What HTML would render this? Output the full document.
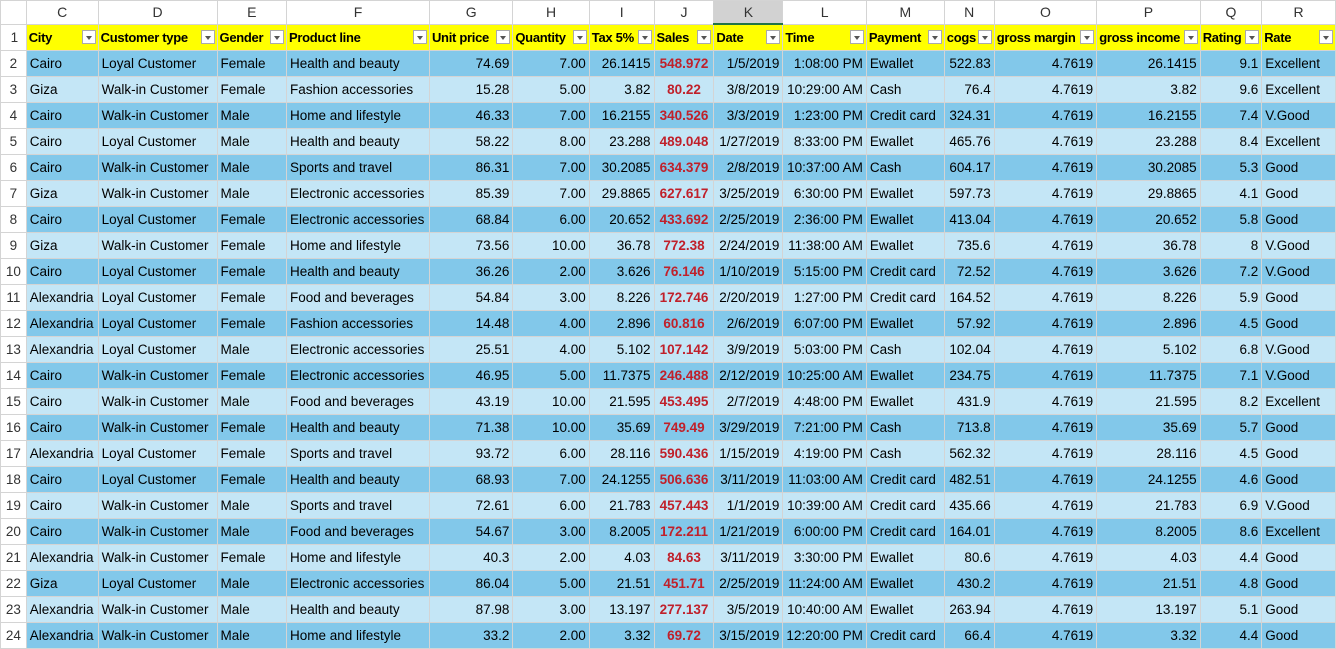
<!DOCTYPE html>
<html><head><meta charset="utf-8"><style>
body{margin:0;width:1336px;height:636px;overflow:hidden;background:#fff;font-family:"Liberation Sans",Arial,sans-serif;font-size:13.5px;color:#000}
table{border-collapse:collapse;table-layout:fixed;position:absolute;left:0;top:0}
td{height:25px;padding:0 3px;border:1px solid #d4d4d4;white-space:nowrap;overflow:hidden;line-height:25px}
tr.h td{height:22px;line-height:22px;background:#fff;text-align:center;color:#333;border-color:#d4d4d4;font-size:14px}
tr.h td.sel{background:#d2d2d2;border-bottom:2px solid #217346}
td.rn{background:#fff;text-align:center;color:#333;padding:0}
tr.y td{background:#ffff00;font-weight:bold;position:relative;font-size:13px;letter-spacing:-0.3px;padding-left:2px}
tr.y td.rn{background:#fff;font-weight:normal;font-size:13.5px;letter-spacing:0}
tr.d td{background:#82c8ea}
tr.l td{background:#c4e6f6}
tr.d td.rn,tr.l td.rn{background:#fff}
.r{text-align:right}.c{text-align:center}
.s{text-align:center;color:#c0202a;font-weight:bold}
.f{position:absolute;right:2px;top:5px;width:14px;height:14px;border:1px solid #aaa;background:#fff;box-sizing:border-box}
.f:after{content:"";position:absolute;left:3px;top:5px;border-left:3px solid transparent;border-right:3px solid transparent;border-top:4px solid #555}
</style></head><body>
<table>
<colgroup><col style="width:26px"><col style="width:72px"><col style="width:119px"><col style="width:70px"><col style="width:143px"><col style="width:84px"><col style="width:77px"><col style="width:65px"><col style="width:60px"><col style="width:69px"><col style="width:81px"><col style="width:78px"><col style="width:50px"><col style="width:103px"><col style="width:104px"><col style="width:62px"><col style="width:74px"></colgroup>
<tr class="h"><td></td><td>C</td><td>D</td><td>E</td><td>F</td><td>G</td><td>H</td><td>I</td><td>J</td><td class="sel">K</td><td>L</td><td>M</td><td>N</td><td>O</td><td>P</td><td>Q</td><td>R</td></tr>
<tr class="y"><td class="rn">1</td><td>City<span class="f"></span></td><td>Customer type<span class="f"></span></td><td>Gender<span class="f"></span></td><td>Product line<span class="f"></span></td><td>Unit price<span class="f"></span></td><td>Quantity<span class="f"></span></td><td>Tax 5%<span class="f"></span></td><td>Sales<span class="f"></span></td><td>Date<span class="f"></span></td><td>Time<span class="f"></span></td><td>Payment<span class="f"></span></td><td>cogs<span class="f"></span></td><td>gross margin<span class="f"></span></td><td>gross income<span class="f"></span></td><td>Rating<span class="f"></span></td><td>Rate<span class="f"></span></td></tr>
<tr class="d"><td class="rn">2</td><td>Cairo</td><td>Loyal Customer</td><td>Female</td><td>Health and beauty</td><td class="r">74.69</td><td class="r">7.00</td><td class="r">26.1415</td><td class="s">548.972</td><td class="r">1/5/2019</td><td class="r">1:08:00 PM</td><td>Ewallet</td><td class="r">522.83</td><td class="r">4.7619</td><td class="r">26.1415</td><td class="r">9.1</td><td>Excellent</td></tr>
<tr class="l"><td class="rn">3</td><td>Giza</td><td>Walk-in Customer</td><td>Female</td><td>Fashion accessories</td><td class="r">15.28</td><td class="r">5.00</td><td class="r">3.82</td><td class="s">80.22</td><td class="r">3/8/2019</td><td class="r">10:29:00 AM</td><td>Cash</td><td class="r">76.4</td><td class="r">4.7619</td><td class="r">3.82</td><td class="r">9.6</td><td>Excellent</td></tr>
<tr class="d"><td class="rn">4</td><td>Cairo</td><td>Walk-in Customer</td><td>Male</td><td>Home and lifestyle</td><td class="r">46.33</td><td class="r">7.00</td><td class="r">16.2155</td><td class="s">340.526</td><td class="r">3/3/2019</td><td class="r">1:23:00 PM</td><td>Credit card</td><td class="r">324.31</td><td class="r">4.7619</td><td class="r">16.2155</td><td class="r">7.4</td><td>V.Good</td></tr>
<tr class="l"><td class="rn">5</td><td>Cairo</td><td>Loyal Customer</td><td>Male</td><td>Health and beauty</td><td class="r">58.22</td><td class="r">8.00</td><td class="r">23.288</td><td class="s">489.048</td><td class="r">1/27/2019</td><td class="r">8:33:00 PM</td><td>Ewallet</td><td class="r">465.76</td><td class="r">4.7619</td><td class="r">23.288</td><td class="r">8.4</td><td>Excellent</td></tr>
<tr class="d"><td class="rn">6</td><td>Cairo</td><td>Walk-in Customer</td><td>Male</td><td>Sports and travel</td><td class="r">86.31</td><td class="r">7.00</td><td class="r">30.2085</td><td class="s">634.379</td><td class="r">2/8/2019</td><td class="r">10:37:00 AM</td><td>Cash</td><td class="r">604.17</td><td class="r">4.7619</td><td class="r">30.2085</td><td class="r">5.3</td><td>Good</td></tr>
<tr class="l"><td class="rn">7</td><td>Giza</td><td>Walk-in Customer</td><td>Male</td><td>Electronic accessories</td><td class="r">85.39</td><td class="r">7.00</td><td class="r">29.8865</td><td class="s">627.617</td><td class="r">3/25/2019</td><td class="r">6:30:00 PM</td><td>Ewallet</td><td class="r">597.73</td><td class="r">4.7619</td><td class="r">29.8865</td><td class="r">4.1</td><td>Good</td></tr>
<tr class="d"><td class="rn">8</td><td>Cairo</td><td>Loyal Customer</td><td>Female</td><td>Electronic accessories</td><td class="r">68.84</td><td class="r">6.00</td><td class="r">20.652</td><td class="s">433.692</td><td class="r">2/25/2019</td><td class="r">2:36:00 PM</td><td>Ewallet</td><td class="r">413.04</td><td class="r">4.7619</td><td class="r">20.652</td><td class="r">5.8</td><td>Good</td></tr>
<tr class="l"><td class="rn">9</td><td>Giza</td><td>Walk-in Customer</td><td>Female</td><td>Home and lifestyle</td><td class="r">73.56</td><td class="r">10.00</td><td class="r">36.78</td><td class="s">772.38</td><td class="r">2/24/2019</td><td class="r">11:38:00 AM</td><td>Ewallet</td><td class="r">735.6</td><td class="r">4.7619</td><td class="r">36.78</td><td class="r">8</td><td>V.Good</td></tr>
<tr class="d"><td class="rn">10</td><td>Cairo</td><td>Loyal Customer</td><td>Female</td><td>Health and beauty</td><td class="r">36.26</td><td class="r">2.00</td><td class="r">3.626</td><td class="s">76.146</td><td class="r">1/10/2019</td><td class="r">5:15:00 PM</td><td>Credit card</td><td class="r">72.52</td><td class="r">4.7619</td><td class="r">3.626</td><td class="r">7.2</td><td>V.Good</td></tr>
<tr class="l"><td class="rn">11</td><td>Alexandria</td><td>Loyal Customer</td><td>Female</td><td>Food and beverages</td><td class="r">54.84</td><td class="r">3.00</td><td class="r">8.226</td><td class="s">172.746</td><td class="r">2/20/2019</td><td class="r">1:27:00 PM</td><td>Credit card</td><td class="r">164.52</td><td class="r">4.7619</td><td class="r">8.226</td><td class="r">5.9</td><td>Good</td></tr>
<tr class="d"><td class="rn">12</td><td>Alexandria</td><td>Loyal Customer</td><td>Female</td><td>Fashion accessories</td><td class="r">14.48</td><td class="r">4.00</td><td class="r">2.896</td><td class="s">60.816</td><td class="r">2/6/2019</td><td class="r">6:07:00 PM</td><td>Ewallet</td><td class="r">57.92</td><td class="r">4.7619</td><td class="r">2.896</td><td class="r">4.5</td><td>Good</td></tr>
<tr class="l"><td class="rn">13</td><td>Alexandria</td><td>Loyal Customer</td><td>Male</td><td>Electronic accessories</td><td class="r">25.51</td><td class="r">4.00</td><td class="r">5.102</td><td class="s">107.142</td><td class="r">3/9/2019</td><td class="r">5:03:00 PM</td><td>Cash</td><td class="r">102.04</td><td class="r">4.7619</td><td class="r">5.102</td><td class="r">6.8</td><td>V.Good</td></tr>
<tr class="d"><td class="rn">14</td><td>Cairo</td><td>Walk-in Customer</td><td>Female</td><td>Electronic accessories</td><td class="r">46.95</td><td class="r">5.00</td><td class="r">11.7375</td><td class="s">246.488</td><td class="r">2/12/2019</td><td class="r">10:25:00 AM</td><td>Ewallet</td><td class="r">234.75</td><td class="r">4.7619</td><td class="r">11.7375</td><td class="r">7.1</td><td>V.Good</td></tr>
<tr class="l"><td class="rn">15</td><td>Cairo</td><td>Walk-in Customer</td><td>Male</td><td>Food and beverages</td><td class="r">43.19</td><td class="r">10.00</td><td class="r">21.595</td><td class="s">453.495</td><td class="r">2/7/2019</td><td class="r">4:48:00 PM</td><td>Ewallet</td><td class="r">431.9</td><td class="r">4.7619</td><td class="r">21.595</td><td class="r">8.2</td><td>Excellent</td></tr>
<tr class="d"><td class="rn">16</td><td>Cairo</td><td>Walk-in Customer</td><td>Female</td><td>Health and beauty</td><td class="r">71.38</td><td class="r">10.00</td><td class="r">35.69</td><td class="s">749.49</td><td class="r">3/29/2019</td><td class="r">7:21:00 PM</td><td>Cash</td><td class="r">713.8</td><td class="r">4.7619</td><td class="r">35.69</td><td class="r">5.7</td><td>Good</td></tr>
<tr class="l"><td class="rn">17</td><td>Alexandria</td><td>Loyal Customer</td><td>Female</td><td>Sports and travel</td><td class="r">93.72</td><td class="r">6.00</td><td class="r">28.116</td><td class="s">590.436</td><td class="r">1/15/2019</td><td class="r">4:19:00 PM</td><td>Cash</td><td class="r">562.32</td><td class="r">4.7619</td><td class="r">28.116</td><td class="r">4.5</td><td>Good</td></tr>
<tr class="d"><td class="rn">18</td><td>Cairo</td><td>Loyal Customer</td><td>Female</td><td>Health and beauty</td><td class="r">68.93</td><td class="r">7.00</td><td class="r">24.1255</td><td class="s">506.636</td><td class="r">3/11/2019</td><td class="r">11:03:00 AM</td><td>Credit card</td><td class="r">482.51</td><td class="r">4.7619</td><td class="r">24.1255</td><td class="r">4.6</td><td>Good</td></tr>
<tr class="l"><td class="rn">19</td><td>Cairo</td><td>Walk-in Customer</td><td>Male</td><td>Sports and travel</td><td class="r">72.61</td><td class="r">6.00</td><td class="r">21.783</td><td class="s">457.443</td><td class="r">1/1/2019</td><td class="r">10:39:00 AM</td><td>Credit card</td><td class="r">435.66</td><td class="r">4.7619</td><td class="r">21.783</td><td class="r">6.9</td><td>V.Good</td></tr>
<tr class="d"><td class="rn">20</td><td>Cairo</td><td>Walk-in Customer</td><td>Male</td><td>Food and beverages</td><td class="r">54.67</td><td class="r">3.00</td><td class="r">8.2005</td><td class="s">172.211</td><td class="r">1/21/2019</td><td class="r">6:00:00 PM</td><td>Credit card</td><td class="r">164.01</td><td class="r">4.7619</td><td class="r">8.2005</td><td class="r">8.6</td><td>Excellent</td></tr>
<tr class="l"><td class="rn">21</td><td>Alexandria</td><td>Walk-in Customer</td><td>Female</td><td>Home and lifestyle</td><td class="r">40.3</td><td class="r">2.00</td><td class="r">4.03</td><td class="s">84.63</td><td class="r">3/11/2019</td><td class="r">3:30:00 PM</td><td>Ewallet</td><td class="r">80.6</td><td class="r">4.7619</td><td class="r">4.03</td><td class="r">4.4</td><td>Good</td></tr>
<tr class="d"><td class="rn">22</td><td>Giza</td><td>Loyal Customer</td><td>Male</td><td>Electronic accessories</td><td class="r">86.04</td><td class="r">5.00</td><td class="r">21.51</td><td class="s">451.71</td><td class="r">2/25/2019</td><td class="r">11:24:00 AM</td><td>Ewallet</td><td class="r">430.2</td><td class="r">4.7619</td><td class="r">21.51</td><td class="r">4.8</td><td>Good</td></tr>
<tr class="l"><td class="rn">23</td><td>Alexandria</td><td>Walk-in Customer</td><td>Male</td><td>Health and beauty</td><td class="r">87.98</td><td class="r">3.00</td><td class="r">13.197</td><td class="s">277.137</td><td class="r">3/5/2019</td><td class="r">10:40:00 AM</td><td>Ewallet</td><td class="r">263.94</td><td class="r">4.7619</td><td class="r">13.197</td><td class="r">5.1</td><td>Good</td></tr>
<tr class="d"><td class="rn">24</td><td>Alexandria</td><td>Walk-in Customer</td><td>Male</td><td>Home and lifestyle</td><td class="r">33.2</td><td class="r">2.00</td><td class="r">3.32</td><td class="s">69.72</td><td class="r">3/15/2019</td><td class="r">12:20:00 PM</td><td>Credit card</td><td class="r">66.4</td><td class="r">4.7619</td><td class="r">3.32</td><td class="r">4.4</td><td>Good</td></tr>
</table>
</body></html>
